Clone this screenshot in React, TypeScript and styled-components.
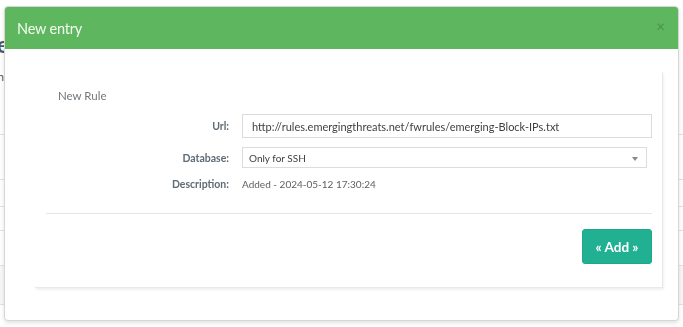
import styled, { createGlobalStyle } from 'styled-components'

const GlobalStyle = createGlobalStyle`
  html, body {
    margin: 0;
    padding: 0;
    background: #fff;
    font-family: Lato, "Open Sans", Arial, sans-serif;
    overflow: hidden;
  }
  * {
    box-sizing: border-box;
  }
`

/* page that sits behind the dialog */
const Page = styled.div`
  padding-top: 30px;
  height: 327px;
`

const TitleClip = styled.div`
  display: flex;
  justify-content: flex-end;
  width: ${(p: { $w: number }) => p.$w}px;
  white-space: nowrap;
`

const PageTitle = styled.h3`
  margin: 0;
  font-size: 23px;
  line-height: 28px;
  font-weight: 700;
  color: #4d5a66;
`

const PageSub = styled.p`
  margin: 12px 0 0;
  font-size: 11px;
  line-height: 14px;
  color: #555;
`

const Table = styled.div`
  margin-top: 50px;
`

const TableRow = styled.div<{ $h: number; $striped?: boolean }>`
  height: ${(p) => p.$h}px;
  border-top: 1px solid #dfe3e7;
  background: ${(p) => (p.$striped ? '#f7f7f7' : 'transparent')};
`

/* the dialog */
const Overlay = styled.div`
  position: fixed;
  inset: 0;
  padding: 6px 4px 6px 4px;
`

const Modal = styled.div`
  width: 675px;
  height: 315px;
  background: #fff;
  border: 1px solid #d6d6d6;
  border-radius: 4px;
  box-shadow: 0 2px 4px rgba(0, 0, 0, 0.12);
  overflow: hidden;
  display: flex;
  flex-direction: column;
`

const ModalHeader = styled.div`
  height: 42px;
  background: #5eb75e;
  display: flex;
  align-items: center;
  justify-content: space-between;
  padding: 0 13px 0 12px;
`

const ModalTitle = styled.h4`
  margin: 0;
  font-size: 14.5px;
  font-weight: 400;
  color: #f3fbf1;
  letter-spacing: -0.2px;
`

const Close = styled.span`
  font-size: 15px;
  line-height: 1;
  color: rgba(0, 0, 0, 0.22);
  margin-top: -4px;
`

const ModalBody = styled.div`
  padding: 23px 15px 0 30px;
`

const Card = styled.div`
  height: 216px;
  padding: 16px 10px 0 11px;
  border-right: 1px solid #e6e9ed;
  border-bottom: 1px solid #e6e9ed;
  box-shadow: 1px 2px 2px rgba(0, 0, 0, 0.06);
`

const CardTitle = styled.div`
  padding-left: 12px;
  font-size: 11.5px;
  line-height: 16px;
  color: #73787c;
`

const FormRow = styled.div<{ $mt: number; $h: number }>`
  display: grid;
  grid-template-columns: 183px 1fr;
  column-gap: 13px;
  align-items: center;
  margin-top: ${(p) => p.$mt}px;
  height: ${(p) => p.$h}px;
`

const Label = styled.label`
  text-align: right;
  font-size: 10.5px;
  font-weight: 700;
  color: #5f6b75;
`

const TextInput = styled.div`
  height: 24px;
  border: 1px solid #dcdcdc;
  padding: 0 9px;
  display: flex;
  align-items: center;
  font-size: 11px;
  color: #3f3f3f;
  white-space: nowrap;
`

const Select = styled.div`
  height: 21px;
  margin-right: 5px;
  border: 1px solid #dcdcdc;
  padding: 0 6px;
  display: flex;
  align-items: center;
  justify-content: space-between;
  font-size: 10px;
  color: #3f3f3f;
`

const Caret = styled.span`
  width: 0;
  height: 0;
  border-left: 3px solid transparent;
  border-right: 3px solid transparent;
  border-top: 4px solid #8a8a8a;
  margin-right: 2px;
  margin-top: 2px;
`

const Value = styled.span`
  font-size: 10px;
  color: #606060;
`

const Divider = styled.div`
  margin-top: 21px;
  border-top: 1px solid #e7e7e7;
`

const Actions = styled.div`
  display: flex;
  justify-content: flex-end;
  margin-top: 15px;
`

const Button = styled.button`
  width: 70px;
  height: 35px;
  border: 1px solid #1ea88b;
  border-radius: 3px;
  background: #22b093;
  color: #fff;
  font-family: inherit;
  font-size: 13.5px;
  font-weight: 700;
  padding: 0;
`

export default function App() {
  return (
    <>
      <GlobalStyle />
      <Page>
        <TitleClip $w={9}>
          <PageTitle>Blocklist Rule</PageTitle>
        </TitleClip>
        <TitleClip $w={4}>
          <PageSub>Rules used to ban</PageSub>
        </TitleClip>
        <Table>
          <TableRow $h={45} />
          <TableRow $h={27} />
          <TableRow $h={24} />
          <TableRow $h={35} />
          <TableRow $h={39} $striped />
          <TableRow $h={20} />
        </Table>
      </Page>
      <Overlay>
        <Modal>
          <ModalHeader>
            <ModalTitle>New entry</ModalTitle>
            <Close>×</Close>
          </ModalHeader>
          <ModalBody>
            <Card>
              <CardTitle>New Rule</CardTitle>
              <FormRow $mt={10} $h={24}>
                <Label>Url:</Label>
                <TextInput>http://rules.emergingthreats.net/fwrules/emerging-Block-IPs.txt</TextInput>
              </FormRow>
              <FormRow $mt={9} $h={21}>
                <Label>Database:</Label>
                <Select>
                  Only for SSH
                  <Caret />
                </Select>
              </FormRow>
              <FormRow $mt={8} $h={16}>
                <Label>Description:</Label>
                <Value>Added - 2024-05-12 17:30:24</Value>
              </FormRow>
              <Divider />
              <Actions>
                <Button>« Add »</Button>
              </Actions>
            </Card>
          </ModalBody>
        </Modal>
      </Overlay>
    </>
  )
}
